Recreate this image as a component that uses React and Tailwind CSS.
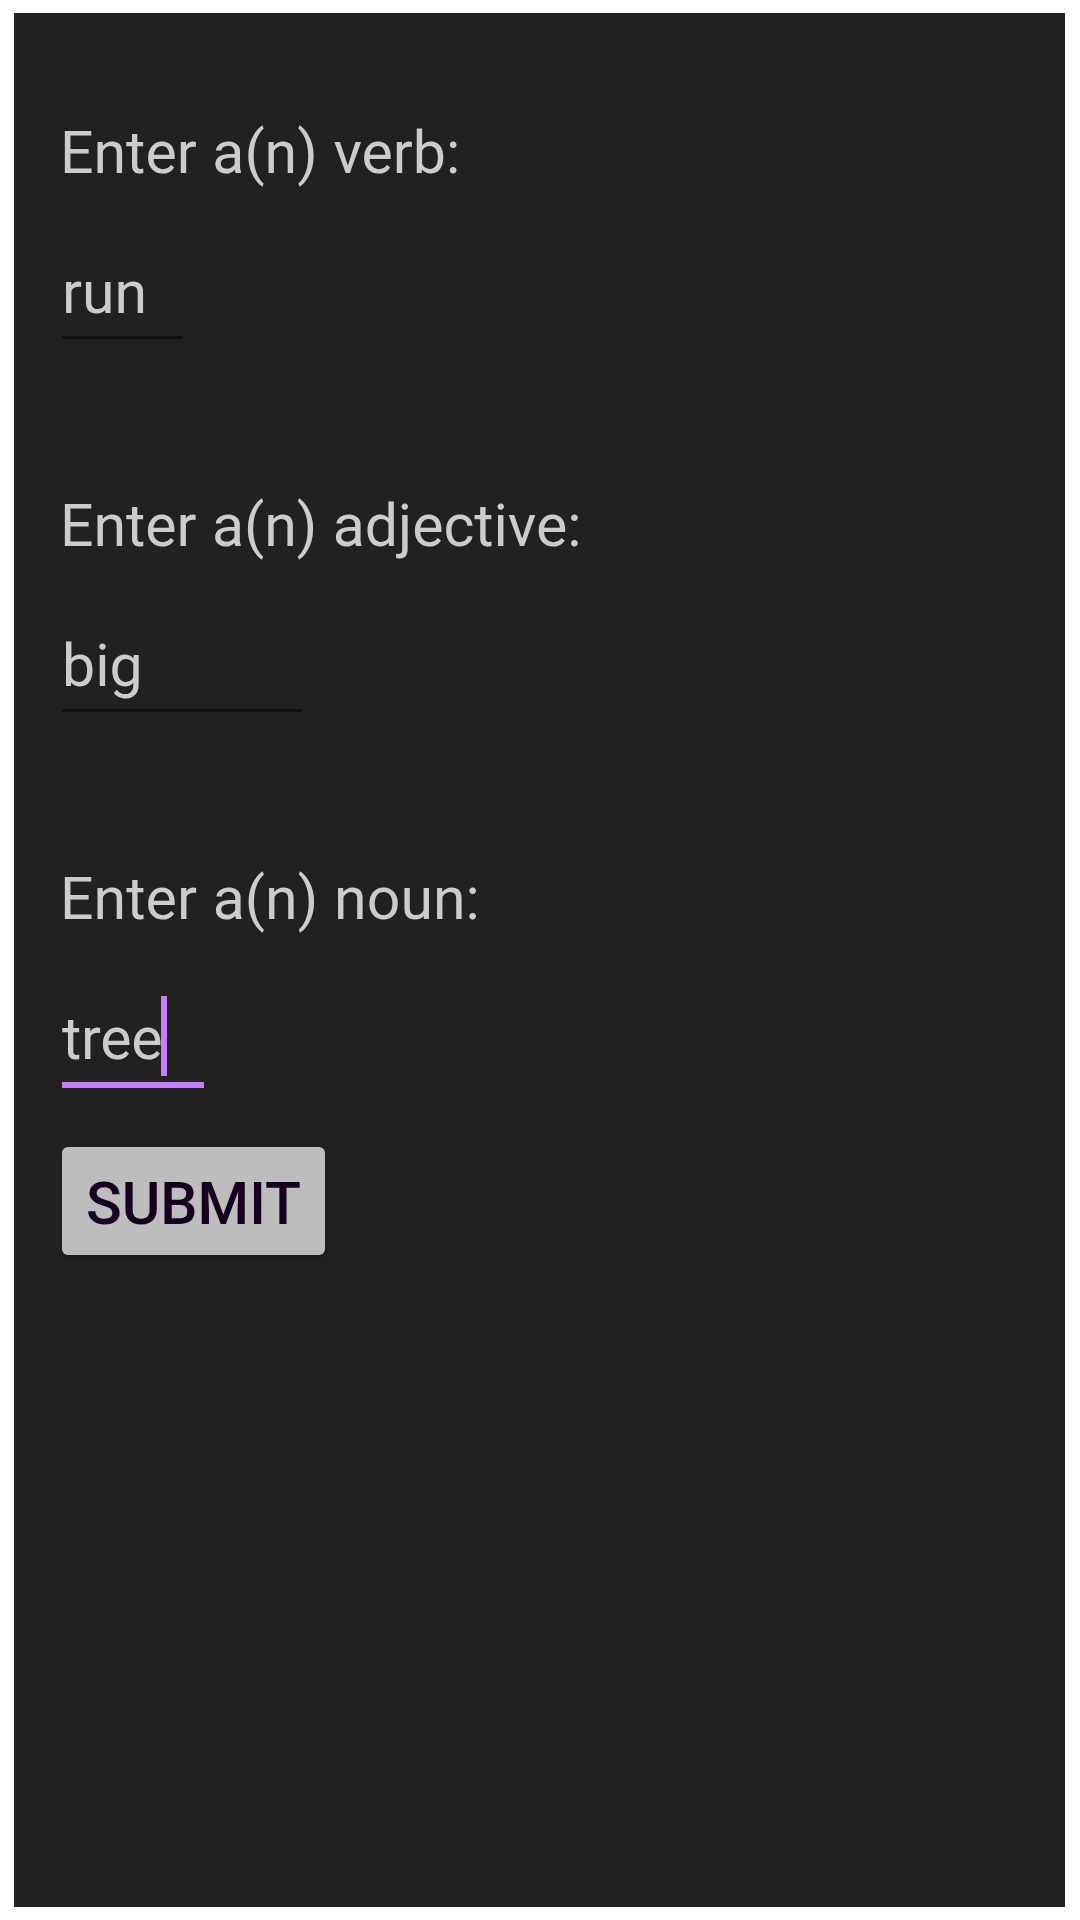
function Field({ label, value, width, tracking = "", active }) {
  return (
    <div className={`flex flex-col items-start ${active ? "" : "h-[373px]"}`}>
      <div className={`-ml-[2px] h-[70px] leading-[70px] [word-spacing:1px] ${tracking}`}>{label}</div>
      <div className={`mt-[70px] flex items-start leading-[70px] ${width} ${active ? "h-[84px] border-b-[6px] border-[#c77dff]" : "h-[81px] border-b-[3px] border-[#101010]"}`}>
        <span className={active ? "w-[99px] tracking-[-0.3px]" : ""}>{value}</span>
        {active && <span className="-mt-2 h-[80px] w-[6px] bg-[#c77dff]" />}
      </div>
    </div>
  );
}

export default function App() {
  return (
    <div className="h-[1920px] w-[1080px] bg-white pt-[13px] pr-[15px] pb-[13px] pl-[14px]">
      <main className="h-full bg-[#212121] pl-[48px] pt-[105px] font-['Roboto',sans-serif] text-[59px] text-[#cccccc]">
        <Field label="Enter a(n) verb:" value="run" width="w-[121px]" />
        <Field label="Enter a(n) adjective:" value="big" width="w-[240px]" tracking="tracking-[-0.05px]" />
        <Field label="Enter a(n) noun:" value="tree" width="w-[142px]" tracking="tracking-[0.06px]" active />
        <button className="mt-[59px] flex h-[108px] w-[263px] justify-center rounded-[6px] bg-[#bdbdbd] pt-[22px] leading-[70px] font-medium text-[#17001f] shadow-[0_3px_5px_-1px_rgba(0,0,0,0.2)]">SUBMIT</button>
      </main>
    </div>
  );
}
